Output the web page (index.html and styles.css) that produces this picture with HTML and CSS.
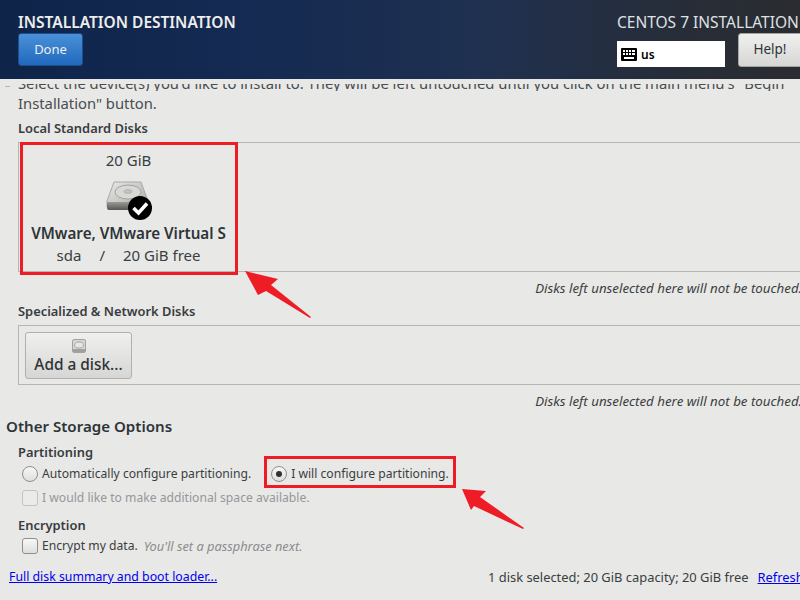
FILE: index.html
```html
<!DOCTYPE html>
<html lang="en">
<head>
<meta charset="utf-8">
<title>Installation Destination</title>
<link rel="stylesheet" href="styles.css">
</head>
<body>
<div class="screen">
  <header class="topbar">
    <div class="top-left">
      <h1 class="title">INSTALLATION DESTINATION</h1>
      <button class="btn-done">Done</button>
    </div>
    <div class="top-right">
      <div class="product">CENTOS 7 INSTALLATION</div>
      <div class="top-controls">
        <div class="kbd-box">
          <svg class="kbd-icon" width="16" height="13" viewBox="0 0 16 13"><rect width="16" height="13" rx="1" fill="#000"/><g fill="#fff"><rect x="2" y="2" width="2" height="2"/><rect x="5" y="2" width="2" height="2"/><rect x="8" y="2" width="2" height="2"/><rect x="11" y="2" width="3" height="2"/><rect x="2" y="5" width="2" height="2"/><rect x="5" y="5" width="2" height="2"/><rect x="8" y="5" width="2" height="2"/><rect x="11" y="5" width="3" height="2"/><rect x="3" y="9" width="10" height="2"/></g></svg>
          <span class="kbd-text">us</span>
        </div>
        <button class="btn-help">Help!</button>
      </div>
    </div>
  </header>
  <main class="content">
    <div class="intro-clip"><p class="intro intro-first">Select the device(s) you'd like to install to. They will be left untouched until you click on the main menu's "Begin</p></div>
    <p class="intro intro-second">Installation" button.</p>
    <div class="subhead local-head">Local Standard Disks</div>
    <div class="disk-panel">
      <div class="disk">
        <div class="disk-size">20 GiB</div>
        <svg class="disk-icon" width="50" height="42" viewBox="0 0 50 42">
          <defs>
            <linearGradient id="dtop" x1="0" y1="0" x2="1" y2="1"><stop offset="0" stop-color="#e9e9e7"/><stop offset="1" stop-color="#a9aaa6"/></linearGradient>
            <linearGradient id="dfront" x1="0" y1="0" x2="0" y2="1"><stop offset="0" stop-color="#9a9b97"/><stop offset="1" stop-color="#55564f"/></linearGradient>
          </defs>
          <path d="M9 3H36L43 22V28H2V22Z" fill="url(#dtop)" stroke="#a8a8a5" stroke-width="1"/>
          <path d="M2 23H43V29Q43 31 41 31H4Q2 31 2 29Z" fill="url(#dfront)"/>
          <ellipse cx="23" cy="13" rx="13" ry="7" fill="#d8d8d5" stroke="#a3a4a0"/>
          <ellipse cx="23" cy="12.500" rx="4" ry="1.800" fill="#c4c5c1" stroke="#9a9b97" stroke-width=".6"/>
          <circle cx="35" cy="29" r="12" fill="#000"/>
          <path d="M28.500 29L33.500 34L42 24.500" fill="none" stroke="#fff" stroke-width="3.600"/>
        </svg>
        <div class="disk-name">VMware, VMware Virtual S</div>
        <div class="disk-meta"><span>sda</span><span>/</span><span>20 GiB free</span></div>
      </div>
    </div>
    <div class="note">Disks left unselected here will not be touched.</div>
    <div class="subhead net-head">Specialized &amp; Network Disks</div>
    <div class="net-panel">
      <button class="btn-add">
        <svg class="add-icon" width="14" height="14" viewBox="0 0 14 14"><rect x=".5" y=".5" width="13" height="13" rx="1.500" fill="#d6d6d4" stroke="#a3a3a1"/><ellipse cx="7" cy="6" rx="4.500" ry="3" fill="#e6e6e4" stroke="#a9a9a7"/><rect x="1" y="10" width="12" height="3" fill="#a0a09e"/></svg>
        <span class="add-label">Add a disk...</span>
      </button>
    </div>
    <div class="note">Disks left unselected here will not be touched.</div>
    <h2 class="section">Other Storage Options</h2>
    <div class="subhead part-head">Partitioning</div>
    <div class="radio-row">
      <label class="opt"><span class="radio"></span>Automatically configure partitioning.</label>
      <label class="opt opt-second"><span class="radio radio-on"></span>I will configure partitioning.</label>
    </div>
    <label class="opt opt-disabled"><span class="check"></span>I would like to make additional space available.</label>
    <div class="subhead enc-head">Encryption</div>
    <label class="opt enc-row"><span class="check check-on"></span>Encrypt my data.<em class="hint">You'll set a passphrase next.</em></label>
    <footer class="foot">
      <a class="link link-left" href="#">Full disk summary and boot loader...</a>
      <div class="foot-right"><span>1 disk selected; 20 GiB capacity; 20 GiB free</span><a class="link" href="#">Refresh...</a></div>
    </footer>
  </main>
  <div class="mark mark-disk"></div>
  <div class="mark mark-radio"></div>
  <svg class="arrows" width="800" height="600" viewBox="0 0 800 600">
    <path d="M245 271L278 279L271 285L311 317L310 318L266 291L258 295Z" fill="#ee1c25"/>
    <path d="M462 489L486 491L480 497L524 528L523 529L474 506L471 510Z" fill="#ee1c25"/>
  </svg>
</div>
</body>
</html>
```
FILE: styles.css
```css
* { box-sizing: border-box; }
html, body { margin: 0; padding: 0; }
body { font-family: "Noto Sans", "Open Sans", sans-serif; color: #2e3436; background: #e8e8e7; }
.screen { position: relative; width: 800px; height: 600px; overflow: hidden; background: #e8e8e7; display: flex; flex-direction: column; }
.topbar { flex: 0 0 79px; height: 79px; display: flex; justify-content: space-between; background: linear-gradient(90deg, #0f2449 0%, #142a52 30%, #1f3050 60%, #272d38 85%, #2a2c30 100%); color: #fff; }
.top-left { padding: 12px 0 0 18px; }
.title { margin: 0; font-size: 15.500px; line-height: 21px; font-weight: 600; color: #eeeeec; white-space: nowrap; }
.btn-done { display: block; width: 65px; height: 33px; padding: 0 0 2px; border: 1px solid #1c4f8f; border-radius: 3px; background: linear-gradient(#4a90d9, #2069bd); color: #eeeeec; font: 13px "Noto Sans", sans-serif; }
.top-right { width: 183px; padding-top: 12px; flex: none; overflow: hidden; }
.product { font-size: 15.500px; line-height: 21px; color: #dfe1e4; white-space: nowrap; }
.top-controls { display: flex; align-items: flex-start; }
.kbd-box { margin-top: 8px; width: 108px; height: 26px; background: #fff; display: flex; align-items: center; padding-left: 4px; color: #000; flex: none; }
.kbd-text { margin-left: 4px; font-size: 12px; font-weight: 600; }
.btn-help { margin-left: 13px; flex: none; width: 70px; height: 34px; padding: 0 6px 2px 0; border: 1px solid #a5a6a3; border-radius: 3px; background: linear-gradient(#f0f0ef, #d6d6d4); color: #2e3436; font: 13.500px "Noto Sans", sans-serif; }
.content { flex: 1; min-height: 0; overflow: hidden; padding: 0 0 0 18px; position: relative; }
.content::before { content: ""; position: absolute; left: 5px; top: 7px; width: 5px; height: 1px; background: #b4b4b2; }
.intro { margin: 0; font-size: 14.800px; line-height: 20px; color: #484d4f; white-space: nowrap; }
.intro-clip { height: 7px; margin-top: 5px; overflow: hidden; }
.intro-first { margin-top: -11px; }
.intro-second { margin-top: 2px; }
.subhead { font-size: 12.900px; line-height: 16px; font-weight: 600; color: #383c3e; }
.local-head { margin-top: 7px; }
.disk-panel { margin-top: 6px; height: 130px; margin-right: -2px; border: 1px solid #b6b6b4; border-right: 0; padding: 0; }
.disk { width: 213px; padding-top: 8px; display: flex; flex-direction: column; align-items: center; margin-left: 3px; }
.disk-size { font-size: 15px; line-height: 18px; color: #3a3e40; }
.disk-icon { margin: 10px 0 3px 2px; flex: none; }
.disk-name { font-size: 15.200px; line-height: 18px; font-weight: 600; color: #2e3436; white-space: nowrap; }
.disk-meta { margin-top: 4px; width: 144px; display: flex; justify-content: space-between; font-size: 15px; line-height: 18px; color: #3a3e40; }
.note { height: 27px; padding-top: 8px; margin-right: -2px; text-align: right; font-size: 13.300px; line-height: 16px; font-style: italic; color: #3a3e40; white-space: nowrap; }
.net-head { margin-top: 4px; }
.net-panel { margin-top: 6px; height: 60px; margin-right: -2px; padding: 6px; border: 1px solid #b6b6b4; border-right: 0; }
.btn-add { display: flex; flex-direction: column; align-items: center; width: 107px; height: 47px; padding: 6px 0 0; border: 1px solid #b0b0ae; border-radius: 3px; background: linear-gradient(#f0f0ef, #d6d6d4); color: #2e3436; font: 500 15.400px/20px "Noto Sans", sans-serif; }
.add-label { margin-top: 2px; }
.section { margin: 4px 0 0 -12px; font-size: 15.100px; line-height: 20px; font-weight: 600; color: #2e3436; }
.part-head { margin-top: 8px; }
.radio-row { display: flex; margin-top: 5px; }
.opt { display: flex; align-items: center; height: 18px; font-size: 12.150px; line-height: 18px; color: #3a3e40; white-space: nowrap; }
.opt-second { margin-left: 16px; }
.opt-disabled { margin-top: 6px; color: #96979a; }
.radio { width: 16px; height: 16px; margin-right: 4px; margin-left: 4px; flex: none; border-radius: 50%; border: 1px solid #8f908e; background: linear-gradient(#f8f8f7, #dededc); display: flex; align-items: center; justify-content: center; }
.radio-on::after { content: ""; width: 6px; height: 6px; border-radius: 50%; background: #2e3436; }
.check { width: 16px; height: 16px; margin-right: 4px; margin-left: 4px; flex: none; border-radius: 3px; border: 1px solid #c3c3c1; background: #ebebe9; }
.check-on { border-color: #8f908e; background: linear-gradient(#f8f8f7, #dededc); }
.enc-head { margin-top: 10px; }
.enc-row { margin-top: 4px; }
.hint { margin-left: 6px; font-size: 12.800px; color: #8b8c8e; }
.foot { margin: 13px 0 0 -9px; display: flex; justify-content: space-between; align-items: center; font-size: 12.900px; line-height: 18px; white-space: nowrap; }
.link-left { font-size: 12.300px; }
.foot-right { display: flex; gap: 9px; width: 312px; flex: none; overflow: hidden; color: #3a3e40; }
.link { color: #0000ee; text-decoration: underline; }
.mark { position: absolute; border: 3px solid #ee1c25; pointer-events: none; }
.mark-disk { left: 20px; top: 142px; width: 218px; height: 133px; }
.mark-radio { left: 264px; top: 456px; width: 192px; height: 32px; }
.arrows { position: absolute; left: 0; top: 0; pointer-events: none; }
```
